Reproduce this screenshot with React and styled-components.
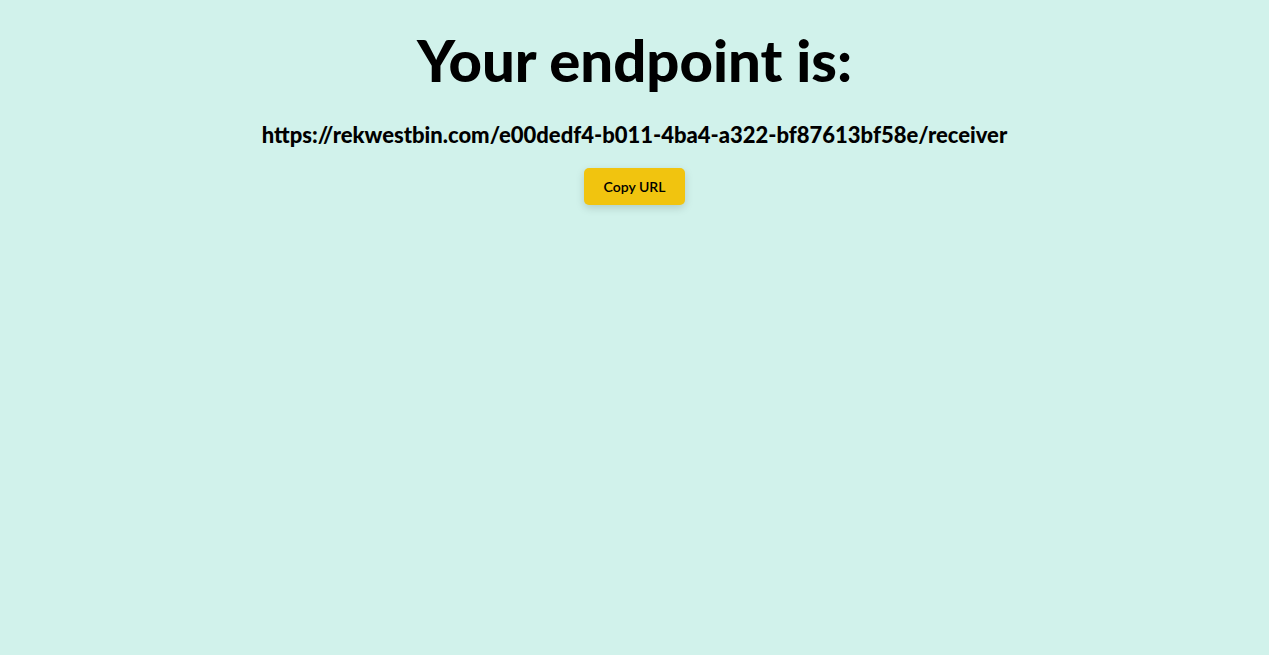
import styled, { createGlobalStyle } from "styled-components";

const GlobalStyle = createGlobalStyle`
    body {
        margin: 0;
        background: #d1f2eb;
        font-family: 'Lato', 'Liberation Sans', sans-serif;
    }
`

export default function App() {
    const endpoint = "https://rekwestbin.com/e00dedf4-b011-4ba4-a322-bf87613bf58e/receiver"

    return (
        <>
            <GlobalStyle />
            <Page>
                <Title>Your endpoint is:</Title>
                <Endpoint>{endpoint}</Endpoint>
                <CopyButton>Copy URL</CopyButton>
            </Page>
        </>
    )
}

const Page = styled.main`
    min-height: 100vh;
    display: flex;
    flex-direction: column;
    align-items: center;
    padding-top: 28px;
    box-sizing: border-box;
`

const Title = styled.h1`
    margin: 0;
    font-size: 58px;
    font-weight: 900;
    line-height: 64px;
    color: #000000;
`

const Endpoint = styled.p`
    margin: 30px 0 0 0;
    font-size: 22px;
    font-weight: 900;
    line-height: 26px;
    color: #000000;
`

const CopyButton = styled.button`
    margin-top: 20px;
    width: 101px;
    height: 37px;
    border: none;
    border-radius: 5px;
    background: #f1c40f;
    box-shadow: 0px 3px 8px rgba(0, 0, 0, 0.15);
    font-family: 'Lato', sans-serif;
    font-size: 14px;
    font-weight: 600;
    color: #000000;
    cursor: pointer;
`
